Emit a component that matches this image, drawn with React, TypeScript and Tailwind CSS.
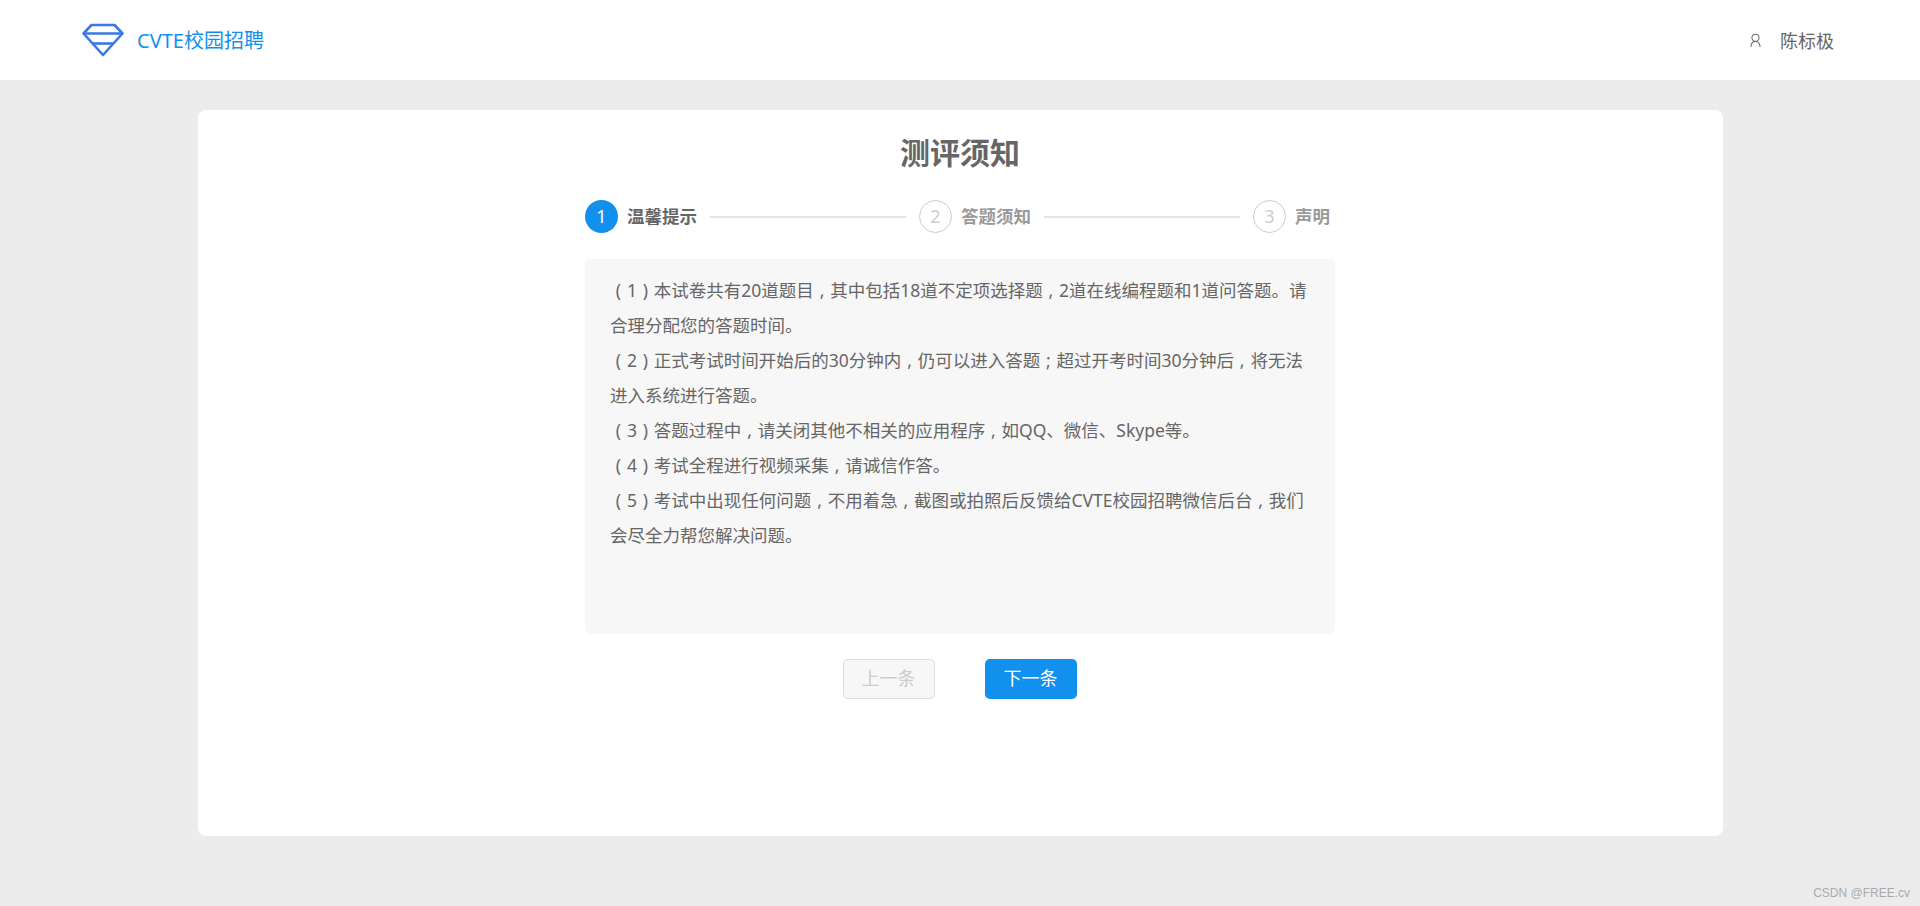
import React from 'react';

const FONT = "font-['Noto_Sans','Noto_Sans_CJK_SC',sans-serif]";

const notices = [
  '（1）本试卷共有20道题目，其中包括18道不定项选择题，2道在线编程题和1道问答题。请合理分配您的答题时间。',
  '（2）正式考试时间开始后的30分钟内，仍可以进入答题；超过开考时间30分钟后，将无法进入系统进行答题。',
  '（3）答题过程中，请关闭其他不相关的应用程序，如QQ、微信、Skype等。',
  '（4）考试全程进行视频采集，请诚信作答。',
  '（5）考试中出现任何问题，不用着急，截图或拍照后反馈给CVTE校园招聘微信后台，我们会尽全力帮您解决问题。',
];

// the reference font draws this punctuation centred in a full-width cell
const CELL_SPACE = '\u2004';
const centrePunctuation = (text: string) =>
  text
    .replace(/（/g, `${CELL_SPACE}(${CELL_SPACE}`)
    .replace(/）/g, `${CELL_SPACE})${CELL_SPACE}`)
    .replace(/，/g, `${CELL_SPACE},${CELL_SPACE}`)
    .replace(/；/g, `${CELL_SPACE};${CELL_SPACE}`);

function Logo() {
  return (
    <svg width="42" height="34" viewBox="0 0 42 34" fill="none" stroke="#3b78e3" strokeWidth="2.6" strokeLinejoin="round">
      <path d="M9.5 2H32.5L40.5 10.5L21 32L1.5 10.5Z" />
      <path d="M1.5 10.5H40.5" />
      <path d="M10.5 20.5H31.5" />
    </svg>
  );
}

function UserIcon() {
  return (
    <svg width="11" height="15" viewBox="0 0 12 16" fill="none" stroke="#666" strokeWidth="1.1">
      <circle cx="6" cy="5" r="3.9" />
      <path d="M1 15C1 11.5 3 9.2 6 9.2S11 11.5 11 15" />
    </svg>
  );
}

function Step({ num, label, active }: { num: number; label: string; active?: boolean }) {
  return (
    <div className="flex items-center gap-[9px] shrink-0">
      <div
        className={
          active
            ? 'w-[33px] h-[33px] rounded-full bg-[#1290ee] text-white flex items-center justify-center text-[18px]'
            : 'w-[33px] h-[33px] rounded-full border border-[#ccc] text-[#ccc] flex items-center justify-center text-[18px]'
        }
      >
        {num}
      </div>
      <span className={active ? 'text-[17.5px] font-bold text-[#666]' : 'text-[17.5px] font-bold text-[#999]'}>{label}</span>
    </div>
  );
}

export default function App() {
  return (
    <div className={`${FONT} relative min-h-[906px] bg-[#ececec]`}>
      <header className="h-20 bg-white flex items-center justify-between pl-[82px] pr-[86px]">
        <div className="flex items-center gap-[13px]">
          <Logo />
          <span className="pt-[2px] text-[20px] text-[#1290ee]">CVTE校园招聘</span>
        </div>
        <div className="flex items-center gap-[19px]">
          <UserIcon />
          <span className="pt-[2px] text-[18px] text-[#666]">陈标极</span>
        </div>
      </header>

      <main className="pt-[30px]">
        <div className="ml-[198px] w-[1525px] h-[726px] bg-white rounded-lg flex flex-col items-center pr-px">
          <h1 className="mt-[22px] text-[30px] leading-[42px] font-bold text-[#666]">测评须知</h1>

          <div className="mt-[26px] w-[750px] flex items-center gap-[13px]">
            <Step num={1} label="温馨提示" active />
            <div className="w-[196px] h-[2px] bg-[#e5e5e5]" />
            <Step num={2} label="答题须知" />
            <div className="w-[196px] h-[2px] bg-[#e5e5e5]" />
            <Step num={3} label="声明" />
          </div>

          <div className="mt-[26px] w-[750px] h-[375px] bg-[#f7f7f7] rounded-md px-[25px] py-[14px] text-[17.5px] leading-[35px] text-[#666]">
            {notices.map((text) => (
              <p key={text}>{centrePunctuation(text)}</p>
            ))}
          </div>

          <div className="mt-[25px] flex gap-[50px] pr-[1px]">
            <button className="w-[92px] h-[40px] pb-[2px] rounded-[5px] bg-[#f7f7f7] border border-[#ddd] text-[18px] text-[#ccc]">上一条</button>
            <button className="w-[92px] h-[40px] pb-[2px] rounded-[5px] bg-[#1290ee] text-[18px] text-white">下一条</button>
          </div>
        </div>
      </main>

      <div className="absolute right-[10px] bottom-[4px] font-['Liberation_Sans',sans-serif] text-[12px] text-[#aaa]">CSDN @FREE.cv</div>
    </div>
  );
}
